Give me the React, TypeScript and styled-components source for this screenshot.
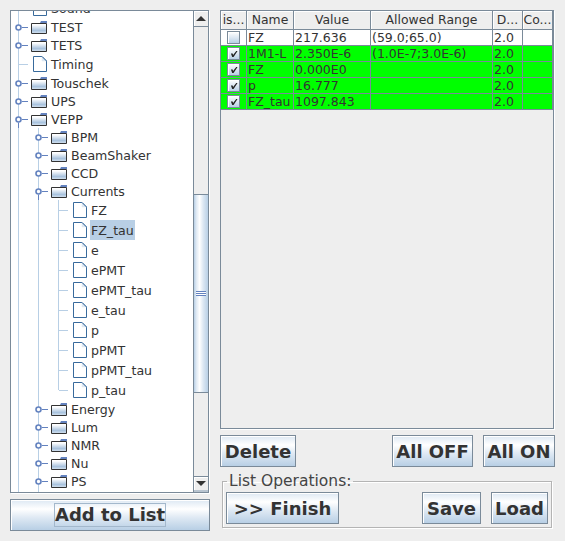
import React from "react";
import styled, { createGlobalStyle } from "styled-components";

const Global = createGlobalStyle`
  html, body { margin: 0; padding: 0; background: #eeeeee; overflow: hidden; }
  body { font-family: "DejaVu Sans", sans-serif; color: #333333; font-size: 12px; }
  * { box-sizing: border-box; }
`;

const METAL_GRADIENT = "linear-gradient(180deg, #dde8f3 0%, #ffffff 30%, #dde8f3 60%, #b8cfe5 100%)";
const LINE = "#b8cfe5";

const Page = styled.div`
  width: 565px;
  height: 541px;
  display: flex;
  padding: 10px 0 0 10px;
  gap: 10px;
`;

const LeftColumn = styled.div`
  width: 200px;
  display: flex;
  flex-direction: column;
  gap: 6px;
`;

const TreeFrame = styled.div`
  height: 483px;
  display: flex;
  border: 1px solid #7a8a99;
  background: #fff;
  box-shadow: 1px 1px 0 #fff;
  width: 199px;
`;

const TreeViewport = styled.div`
  flex: 1;
  overflow: hidden;
  min-width: 0;
`;

const TreeList = styled.div`
  margin-top: -13px;
`;

const Row = styled.div<{ $h: number }>`
  height: ${(p) => p.$h}px;
  display: flex;
  align-items: center;
  white-space: nowrap;
`;

const Guide = styled.span<{ $kind: "pass" | "tee" | "elbow" | "none" }>`
  position: relative;
  width: 20px;
  align-self: stretch;
  flex: none;
  &::before {
    content: "";
    position: absolute;
    left: 7px;
    top: 0;
    width: 1px;
    height: ${(p) => (p.$kind === "elbow" ? "50%" : "100%")};
    background: ${(p) => (p.$kind === "none" ? "transparent" : LINE)};
  }
  &::after {
    content: "";
    position: absolute;
    left: 8px;
    top: 50%;
    width: 9px;
    height: 1px;
    background: ${(p) => (p.$kind === "tee" || p.$kind === "elbow" ? LINE : "transparent")};
  }
`;

const HandleIcon = styled.svg`
  position: absolute;
  left: 3px;
  top: 50%;
  margin-top: -9px;
  display: block;
`;

const IconBox = styled.span<{ $leaf?: boolean }>`
  display: flex;
  flex: none;
  width: ${(p) => (p.$leaf ? "14px" : "16px")};
  margin-left: ${(p) => (p.$leaf ? "2px" : "0")};
`;

const Label = styled.span<{ $selected?: boolean }>`
  margin-left: 3px;
  padding: 1px 1px 0;
  height: 20px;
  line-height: 20px;
  font-size: 12.6px;
  color: #333;
  background: ${(p) => (p.$selected ? "#b8cfe5" : "transparent")};
`;

const ScrollBar = styled.div`
  width: 15px;
  flex: none;
  display: flex;
  flex-direction: column;
  border-left: 1px solid #7a8a99;
  background: #eeeeee;
`;

const ScrollArrow = styled.div<{ $down?: boolean }>`
  height: 16px;
  flex: none;
  display: flex;
  align-items: center;
  justify-content: center;
  background: #eeeeee;
  box-shadow: inset 1px 1px 0 #fff;
  border-bottom: ${(p) => (p.$down ? "2px solid #b8c4d0" : "1px solid #7a8a99")};
  border-top: ${(p) => (p.$down ? "1px solid #7a8a99" : "0")};
  &::after {
    content: "";
    width: 0;
    height: 0;
    border-left: 5px solid transparent;
    border-right: 5px solid transparent;
    border-${(p) => (p.$down ? "top" : "bottom")}: 5px solid #333;
  }
`;

const ScrollTrack = styled.div`
  flex: 1;
  display: flex;
  flex-direction: column;
  padding-top: 167px;
`;

const ScrollThumb = styled.div`
  height: 199px;
  flex: none;
  border-top: 1px solid #7a8a99;
  border-bottom: 1px solid #7a8a99;
  background: linear-gradient(90deg, #b8cfe5 0%, #dde8f3 15%, #ffffff 40%, #dde8f3 65%, #b8cfe5 100%);
  display: flex;
  align-items: center;
  justify-content: center;
`;

const Grip = styled.span`
  width: 10px;
  height: 5px;
  background: repeating-linear-gradient(180deg, #6382bf 0 1px, #ffffff 1px 2px);
`;

const Btn = styled.button<{ $w: number; $h?: number; $fs?: number }>`
  width: ${(p) => p.$w}px;
  height: ${(p) => p.$h ?? 32}px;
  flex: none;
  padding: 0;
  border: 1px solid #7a8a99;
  background: ${METAL_GRADIENT};
  box-shadow: inset 1px 1px 0 #ffffff;
  font-family: "DejaVu Sans", sans-serif;
  font-weight: bold;
  font-size: ${(p) => p.$fs ?? 18}px;
  color: #333333;
  display: flex;
  align-items: center;
  justify-content: center;
  white-space: nowrap;
`;

const AddButton = styled(Btn)`
  width: 200px;
`;

const FocusRing = styled.span`
  width: 112px;
  height: 24px;
  line-height: 22px;
  border: 1px solid #a3b8cc;
  text-align: center;
`;

const RightColumn = styled.div`
  width: 335px;
  display: flex;
  flex-direction: column;
`;

const TableFrame = styled.div`
  width: 334px;
  height: 419px;
  border: 1px solid #7a8a99;
  box-shadow: 1px 1px 0 #fff;
  background: #eeeeee;
`;

const COLUMNS = "26px 47px 77px 122px 30px 30px";

const HeaderRow = styled.div`
  display: grid;
  grid-template-columns: ${COLUMNS};
  height: 19px;
`;

const HeaderCell = styled.div`
  border-right: 1px solid #7a8a99;
  border-bottom: 1px solid #7a8a99;
  box-shadow: inset 1px 1px 0 #fff;
  text-align: center;
  line-height: 18px;
  font-size: 12.4px;
  overflow: hidden;
  white-space: nowrap;
`;

const BodyRow = styled.div<{ $on: boolean }>`
  display: grid;
  grid-template-columns: ${COLUMNS};
  height: 16px;
  background: ${(p) => (p.$on ? "#00ff00" : "#ffffff")};
`;

const BodyCell = styled.div`
  border-right: 1px solid #7a8a99;
  border-bottom: 1px solid #7a8a99;
  padding-left: 1px;
  line-height: 15px;
  font-size: 12.5px;
  overflow: hidden;
  white-space: nowrap;
`;

const CheckCell = styled(BodyCell)`
  padding: 0;
  display: flex;
  align-items: center;
  justify-content: center;
`;

const Check = styled.span`
  width: 13px;
  height: 13px;
  border: 1px solid #7a8a99;
  box-shadow: inset 1px 1px 0 #fff;
  background: linear-gradient(180deg, #ffffff 0%, #dde8f3 50%, #b8cfe5 100%);
  display: flex;
  align-items: center;
  justify-content: center;
`;

const ButtonRow = styled.div`
  display: flex;
  margin-top: 6px;
  gap: 10px;
`;

const Spacer = styled.span`
  flex: 1;
`;

const GroupBox = styled.fieldset`
  width: 330px;
  height: 55px;
  margin: 6px 0 0 2px;
  padding: 0 3px 1px 3px;
  border: 1px solid #b4b4b4;
  box-shadow: 1px 1px 0 #fff, inset 1px 1px 0 #fff;
  display: block;
  min-width: 0;
`;

const GroupLegend = styled.legend`
  padding: 0 2px;
  margin-left: 1px;
  font-size: 15.5px;
  line-height: 16px;
  color: #444;
`;

const GroupRow = styled.div`
  display: flex;
  gap: 10px;
  margin-top: 3px;
`;

function Folder() {
  return (
    <svg width="16" height="13" viewBox="0 0 16 13">
      <defs>
        <linearGradient id="folderFill" x1="0" y1="0" x2="0" y2="1">
          <stop offset="0" stopColor="#ffffff" />
          <stop offset="0.15" stopColor="#ffffff" />
          <stop offset="0.7" stopColor="#a9c3de" />
          <stop offset="1" stopColor="#d6e3f0" />
        </linearGradient>
      </defs>
      <path d="M9 2 L10 0 H16 V2 Z" fill="#6382bf" />
      <rect x="0.5" y="2.5" width="15" height="10" fill="url(#folderFill)" />
      <path d="M15.5 2.5 H0.5 V12.5 H15.5 V2.5" fill="none" stroke="#333333" />
    </svg>
  );
}

function Leaf() {
  return (
    <svg width="14" height="16" viewBox="0 0 14 16">
      <path d="M0.5 0.5 H9 L13.5 5 V15.5 H0.5 Z" fill="#ffffff" stroke="#386a9c" />
      <path d="M9 0.5 V5 H13.5" fill="#dde8f3" stroke="#dde8f3" strokeWidth="0.5" />
      <path d="M9 0.5 L13.5 5" stroke="#386a9c" fill="none" />
    </svg>
  );
}

function Handle({ open }: { open: boolean }) {
  return (
    <HandleIcon width="14" height="18" viewBox="0 0 14 18">
      <path d="M8 9.5 H14" stroke="#6382bf" fill="none" />
      {open && <path d="M4.5 13 V18" stroke="#6382bf" fill="none" />}
      <circle cx="4.5" cy="9.5" r="2.5" fill="#fff" stroke="#6382bf" strokeWidth="1.6" />
    </HandleIcon>
  );
}

function CheckMark() {
  return (
    <svg width="8" height="8" viewBox="0 0 9 9">
      <path d="M1 4 L3 4 L3.5 5.5 L7 1 L8.5 1 L4 8 L2.5 8 Z" fill="#222" />
    </svg>
  );
}

type Kind = "folder" | "openFolder" | "leaf";
interface Item {
  name: string;
  depth: number;
  kind: Kind;
  last?: boolean;
  selected?: boolean;
}

const ITEMS: Item[] = [
  { name: "Sound", depth: 0, kind: "leaf" },
  { name: "TEST", depth: 0, kind: "folder" },
  { name: "TETS", depth: 0, kind: "folder" },
  { name: "Timing", depth: 0, kind: "leaf" },
  { name: "Touschek", depth: 0, kind: "folder" },
  { name: "UPS", depth: 0, kind: "folder" },
  { name: "VEPP", depth: 0, kind: "openFolder" },
  { name: "BPM", depth: 1, kind: "folder" },
  { name: "BeamShaker", depth: 1, kind: "folder" },
  { name: "CCD", depth: 1, kind: "folder" },
  { name: "Currents", depth: 1, kind: "openFolder" },
  { name: "FZ", depth: 2, kind: "leaf" },
  { name: "FZ_tau", depth: 2, kind: "leaf", selected: true },
  { name: "e", depth: 2, kind: "leaf" },
  { name: "ePMT", depth: 2, kind: "leaf" },
  { name: "ePMT_tau", depth: 2, kind: "leaf" },
  { name: "e_tau", depth: 2, kind: "leaf" },
  { name: "p", depth: 2, kind: "leaf" },
  { name: "pPMT", depth: 2, kind: "leaf" },
  { name: "pPMT_tau", depth: 2, kind: "leaf" },
  { name: "p_tau", depth: 2, kind: "leaf", last: true },
  { name: "Energy", depth: 1, kind: "folder" },
  { name: "Lum", depth: 1, kind: "folder" },
  { name: "NMR", depth: 1, kind: "folder" },
  { name: "Nu", depth: 1, kind: "folder" },
  { name: "PS", depth: 1, kind: "folder" },
  { name: "", depth: 1, kind: "folder" },
];

function TreeRow({ item }: { item: Item }) {
  const leaf = item.kind === "leaf";
  const blank = item.name === "";
  const passes = Array.from({ length: item.depth }, (_, i) => <Guide key={i} $kind="pass" />);
  return (
    <Row $h={blank ? 18 : leaf ? 20 : 18}>
      {passes}
      {blank ? (
        <Guide $kind="pass" />
      ) : leaf ? (
        <Guide $kind={item.last ? "elbow" : "tee"} />
      ) : (
        <Guide $kind="pass">
          <Handle open={item.kind === "openFolder"} />
        </Guide>
      )}
      {!blank && (
        <IconBox $leaf={leaf}>{leaf ? <Leaf /> : <Folder />}</IconBox>
      )}
      {!blank && <Label $selected={item.selected}>{item.name}</Label>}
    </Row>
  );
}

const HEADERS = ["is...", "Name", "Value", "Allowed Range", "D...", "Co..."];
const ROWS = [
  { on: false, name: "FZ", value: "217.636", range: "(59.0;65.0)", d: "2.0" },
  { on: true, name: "1M1-L", value: "2.350E-6", range: "(1.0E-7;3.0E-6)", d: "2.0" },
  { on: true, name: "FZ", value: "0.000E0", range: "", d: "2.0" },
  { on: true, name: "p", value: "16.777", range: "", d: "2.0" },
  { on: true, name: "FZ_tau", value: "1097.843", range: "", d: "2.0" },
];

export default function App() {
  return (
    <>
      <Global />
      <Page>
        <LeftColumn>
          <TreeFrame>
            <TreeViewport>
              <TreeList>
                {ITEMS.map((item, i) => (
                  <TreeRow key={i} item={item} />
                ))}
              </TreeList>
            </TreeViewport>
            <ScrollBar>
              <ScrollArrow />
              <ScrollTrack>
                <ScrollThumb>
                  <Grip />
                </ScrollThumb>
              </ScrollTrack>
              <ScrollArrow $down />
            </ScrollBar>
          </TreeFrame>
          <AddButton $w={200}>
            <FocusRing>Add to List</FocusRing>
          </AddButton>
        </LeftColumn>
        <RightColumn>
          <TableFrame>
            <HeaderRow>
              {HEADERS.map((h) => (
                <HeaderCell key={h}>{h}</HeaderCell>
              ))}
            </HeaderRow>
            {ROWS.map((r, i) => (
              <BodyRow key={i} $on={r.on}>
                <CheckCell>
                  <Check>{r.on && <CheckMark />}</Check>
                </CheckCell>
                <BodyCell>{r.name}</BodyCell>
                <BodyCell>{r.value}</BodyCell>
                <BodyCell>{r.range}</BodyCell>
                <BodyCell>{r.d}</BodyCell>
                <BodyCell />
              </BodyRow>
            ))}
          </TableFrame>
          <ButtonRow>
            <Btn $w={76}>Delete</Btn>
            <Spacer />
            <Btn $w={81}>All OFF</Btn>
            <Btn $w={72}>All ON</Btn>
          </ButtonRow>
          <GroupBox>
            <GroupLegend>List Operations:</GroupLegend>
            <GroupRow>
              <Btn $w={113}>&gt;&gt; Finish</Btn>
              <Spacer />
              <Btn $w={59}>Save</Btn>
              <Btn $w={57}>Load</Btn>
            </GroupRow>
          </GroupBox>
        </RightColumn>
      </Page>
    </>
  );
}
